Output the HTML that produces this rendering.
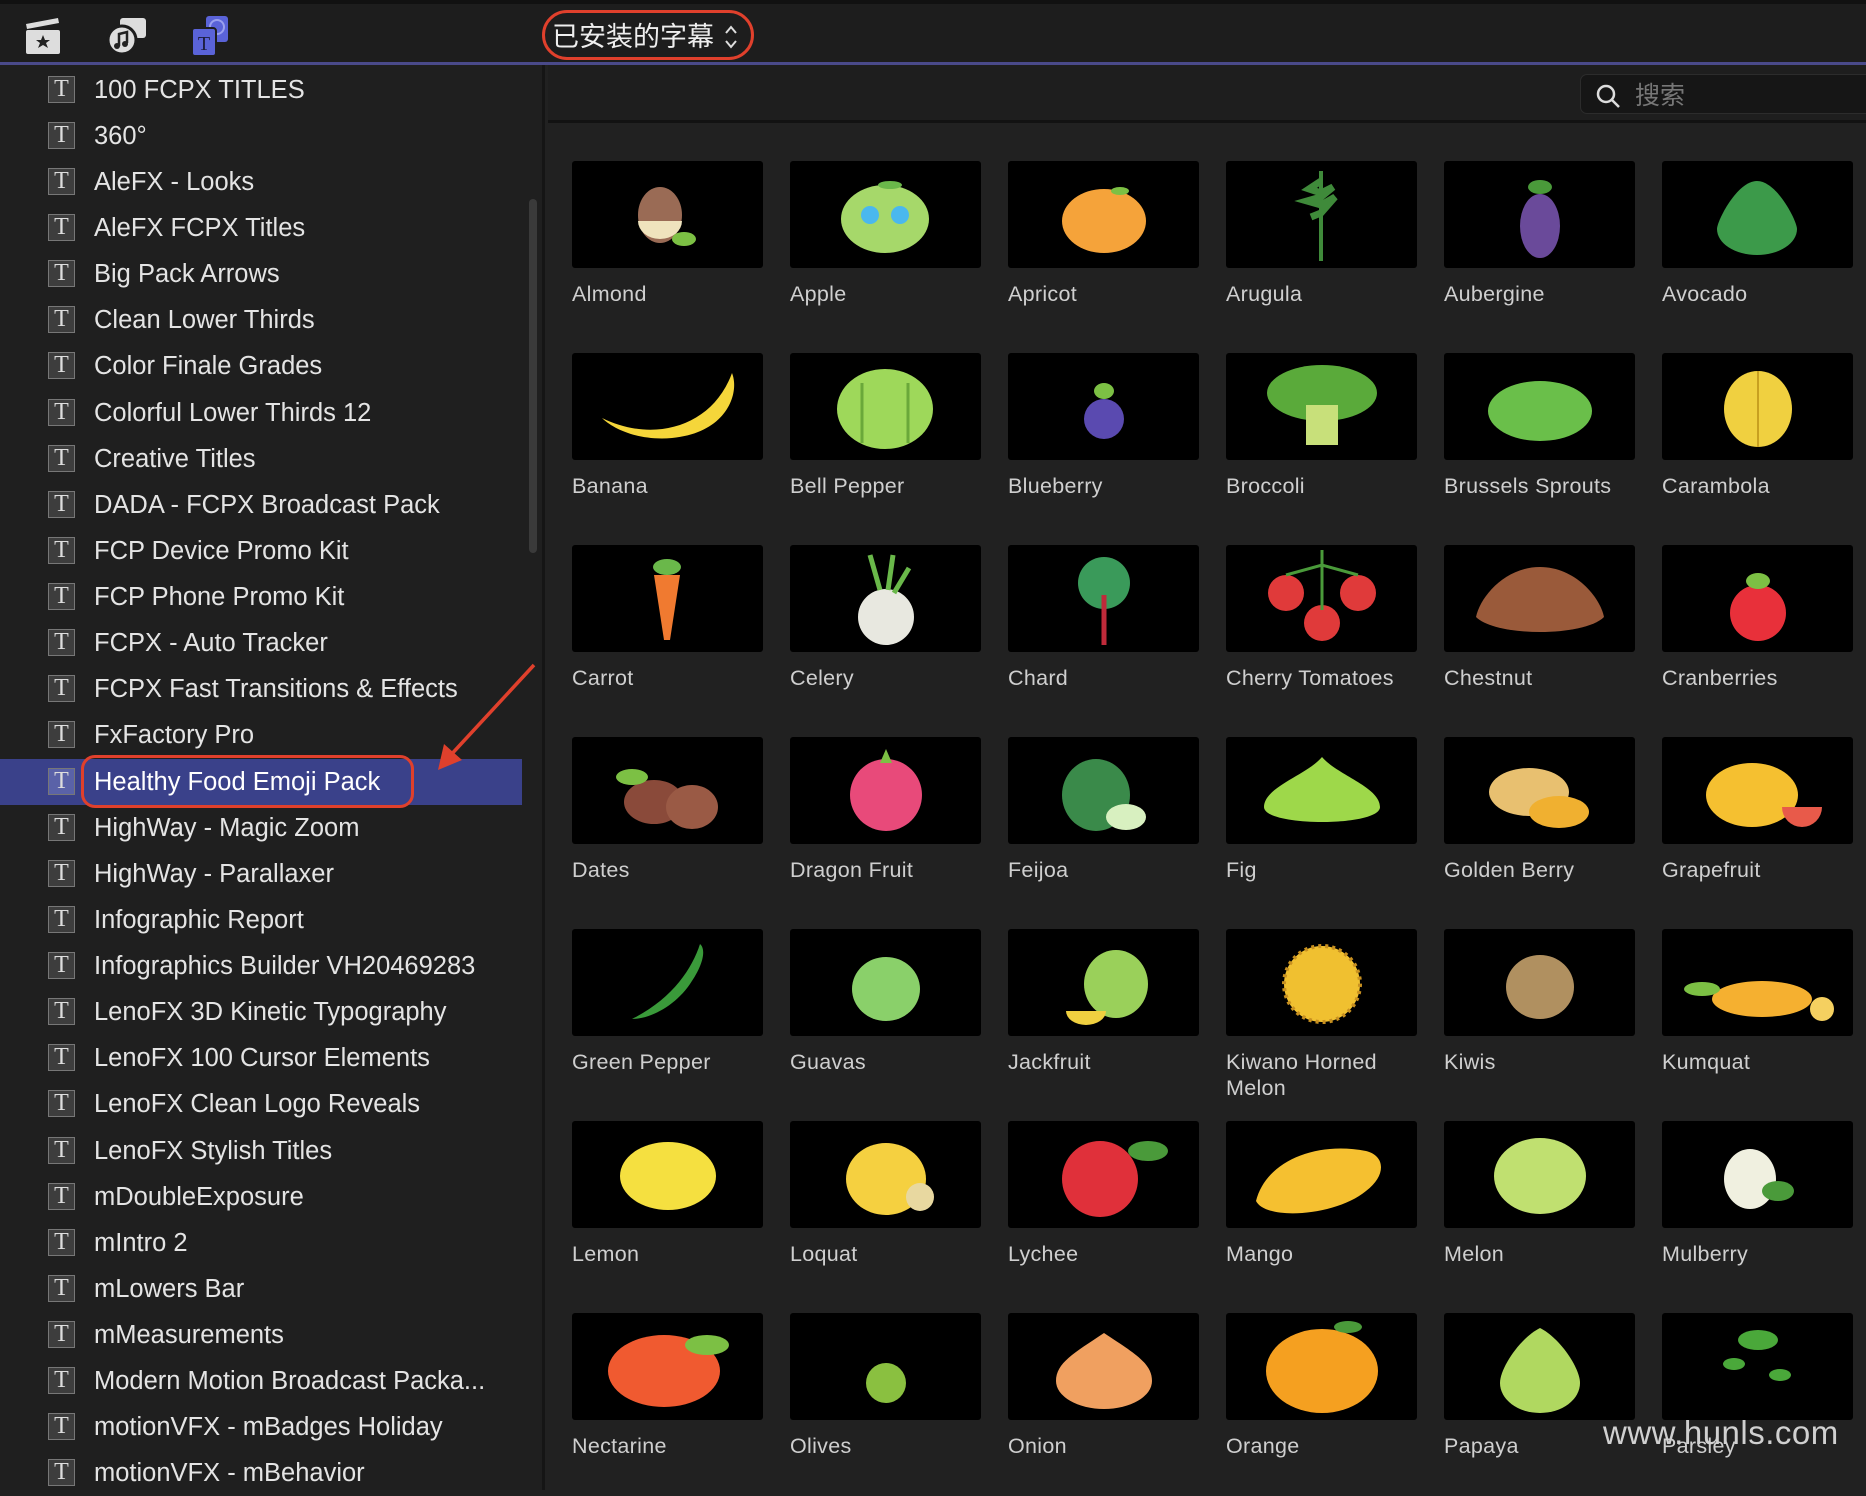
<!DOCTYPE html>
<html><head><meta charset="utf-8"><style>
*{margin:0;padding:0;box-sizing:border-box}
body{width:1866px;height:1490px;background:#212121;position:relative;overflow:hidden;font-family:"Liberation Sans","Noto Sans CJK SC",sans-serif;color:#e4e4e4}
#top{position:absolute;left:0;top:0;width:1866px;height:63px;background:#1d1d1d;border-top:4px solid #111}
#bl{position:absolute;left:0;top:62px;width:1866px;height:3px;background:#4a4a8a}
#side{position:absolute;left:0;top:65px;width:545px;height:1425px;background:#1f1f1f;border-right:3px solid #151515}
.row{position:absolute;left:0;width:522px;height:46px;font-size:25.5px;line-height:46px;padding-left:94px;white-space:nowrap}
.row.sel{background:#3a418a;color:#fff}
.ti{position:absolute;left:48px;top:9px;width:27px;height:27px;background:#3d3d3d;border:1px solid #777;font-family:"Liberation Serif",serif;font-size:24px;line-height:25px;text-align:center;color:#ddd}
.sel .ti{background:#5a62a8}
#sb{position:absolute;left:529px;top:134px;width:8px;height:354px;border-radius:4px;background:#3a3a3a}
#sbar{position:absolute;left:548px;top:65px;width:1318px;height:58px;background:#1e1e1e;border-bottom:3px solid #121212}
#search{position:absolute;left:1580px;top:74px;width:300px;height:40px;border-radius:7px;background:#161616;border:1px solid #2c2c2c}
.th{position:absolute;width:191px;height:107px;background:#000;border-radius:3px}
.lb{position:absolute;width:200px;font-size:21.5px;color:#cfcfcf;letter-spacing:.3px;line-height:26px}
</style></head><body>
<div id="top">
<svg style="position:absolute;left:24px;top:10px" width="38" height="42" viewBox="0 0 38 42"><path d="M2 10 L34 4 L35 9 L3 15Z" fill="#ddd"/><rect x="2" y="16" width="34" height="24" rx="2" fill="#ddd"/><path d="M19 21l2 5h5l-4 3 2 5-5-3-5 3 2-5-4-3h5z" fill="#222"/></svg>
<svg style="position:absolute;left:106px;top:10px" width="42" height="42" viewBox="0 0 42 42"><rect x="14" y="4" width="26" height="20" rx="3" fill="#ddd"/><circle cx="16" cy="26" r="14" fill="#ddd" stroke="#1d1d1d" stroke-width="3"/><path d="M13 32V20l8-2v11" stroke="#222" stroke-width="2.5" fill="none"/><circle cx="11" cy="32" r="3" fill="#222"/><circle cx="19" cy="30" r="3" fill="#222"/></svg>
<svg style="position:absolute;left:190px;top:10px" width="42" height="44" viewBox="0 0 42 44"><rect x="16" y="2" width="22" height="26" rx="3" fill="#5a63d8"/><circle cx="27" cy="13" r="7" fill="none" stroke="#9aa0ee" stroke-width="2"/><rect x="2" y="14" width="24" height="28" rx="3" fill="#5a63d8" stroke="#1d1d1d" stroke-width="2"/><text x="14" y="36" font-family="Liberation Serif" font-size="20" fill="#1d1d3d" text-anchor="middle">T</text></svg>
<div style="position:absolute;left:542px;top:6px;width:212px;height:50px;border:3px solid #e0402c;border-radius:25px"></div>
<div style="position:absolute;left:552px;top:14px;font-size:27px;color:#eee;font-family:'Noto Sans CJK SC',sans-serif;line-height:34px">已安装的字幕</div>
<svg style="position:absolute;left:724px;top:20px" width="14" height="26" viewBox="0 0 14 26"><path d="M2 9l5-6 5 6M2 17l5 6 5-6" stroke="#ddd" stroke-width="2" fill="none"/></svg>
</div>
<div id="bl"></div>
<div id="side">
<div class="row" style="top:2px"><span class="ti">T</span>100 FCPX TITLES</div>
<div class="row" style="top:48px"><span class="ti">T</span>360°</div>
<div class="row" style="top:94px"><span class="ti">T</span>AleFX - Looks</div>
<div class="row" style="top:140px"><span class="ti">T</span>AleFX FCPX Titles</div>
<div class="row" style="top:186px"><span class="ti">T</span>Big Pack Arrows</div>
<div class="row" style="top:232px"><span class="ti">T</span>Clean Lower Thirds</div>
<div class="row" style="top:278px"><span class="ti">T</span>Color Finale Grades</div>
<div class="row" style="top:325px"><span class="ti">T</span>Colorful Lower Thirds 12</div>
<div class="row" style="top:371px"><span class="ti">T</span>Creative Titles</div>
<div class="row" style="top:417px"><span class="ti">T</span>DADA - FCPX Broadcast Pack</div>
<div class="row" style="top:463px"><span class="ti">T</span>FCP Device Promo Kit</div>
<div class="row" style="top:509px"><span class="ti">T</span>FCP Phone Promo Kit</div>
<div class="row" style="top:555px"><span class="ti">T</span>FCPX - Auto Tracker</div>
<div class="row" style="top:601px"><span class="ti">T</span>FCPX Fast Transitions &amp; Effects</div>
<div class="row" style="top:647px"><span class="ti">T</span>FxFactory Pro</div>
<div class="row sel" style="top:694px"><span class="ti">T</span>Healthy Food Emoji Pack</div>
<div class="row" style="top:740px"><span class="ti">T</span>HighWay - Magic Zoom</div>
<div class="row" style="top:786px"><span class="ti">T</span>HighWay - Parallaxer</div>
<div class="row" style="top:832px"><span class="ti">T</span>Infographic Report</div>
<div class="row" style="top:878px"><span class="ti">T</span>Infographics Builder VH20469283</div>
<div class="row" style="top:924px"><span class="ti">T</span>LenoFX 3D Kinetic Typography</div>
<div class="row" style="top:970px"><span class="ti">T</span>LenoFX 100 Cursor Elements</div>
<div class="row" style="top:1016px"><span class="ti">T</span>LenoFX Clean Logo Reveals</div>
<div class="row" style="top:1063px"><span class="ti">T</span>LenoFX Stylish Titles</div>
<div class="row" style="top:1109px"><span class="ti">T</span>mDoubleExposure</div>
<div class="row" style="top:1155px"><span class="ti">T</span>mIntro 2</div>
<div class="row" style="top:1201px"><span class="ti">T</span>mLowers Bar</div>
<div class="row" style="top:1247px"><span class="ti">T</span>mMeasurements</div>
<div class="row" style="top:1293px"><span class="ti">T</span>Modern Motion Broadcast Packa...</div>
<div class="row" style="top:1339px"><span class="ti">T</span>motionVFX - mBadges Holiday</div>
<div class="row" style="top:1385px"><span class="ti">T</span>motionVFX - mBehavior</div>
<div id="sb"></div>
</div>
<div style="position:absolute;left:81px;top:755px;width:333px;height:53px;border:3px solid #e0402c;border-radius:14px"></div>
<svg style="position:absolute;left:430px;top:660px" width="110" height="115" viewBox="0 0 110 115"><path d="M104 5L18 98" stroke="#e0402c" stroke-width="3.5"/><path d="M8 110L14 84 32 100Z" fill="#e0402c"/></svg>
<div id="sbar"><div id="search" style="left:1032px;top:9px">
<svg style="position:absolute;left:14px;top:8px" width="26" height="26" viewBox="0 0 26 26"><circle cx="11" cy="11" r="8" stroke="#ddd" stroke-width="2.5" fill="none"/><path d="M17 17l7 7" stroke="#ddd" stroke-width="2.5"/></svg>
<div style="position:absolute;left:54px;top:2px;font-size:25px;color:#777;font-family:'Noto Sans CJK SC',sans-serif;line-height:34px">搜索</div></div></div>

<!-- grid -->
<div class="th" style="left:572px;top:161px"><svg width="191" height="107"><ellipse cx="88" cy="54" rx="22" ry="28" fill="#9a6b55"/><path d="M66 60h44a22 18 0 0 1-44 0z" fill="#efe3bd"/><ellipse cx="112" cy="78" rx="12" ry="7" fill="#7cc044"/></svg></div><div class="lb" style="left:572px;top:281px">Almond</div>
<div class="th" style="left:790px;top:161px"><svg width="191" height="107"><ellipse cx="95" cy="58" rx="44" ry="34" fill="#a6d86a"/><circle cx="80" cy="54" r="9" fill="#4ab8ee"/><circle cx="110" cy="54" r="9" fill="#4ab8ee"/><ellipse cx="100" cy="24" rx="12" ry="4" fill="#6ab84a"/></svg></div><div class="lb" style="left:790px;top:281px">Apple</div>
<div class="th" style="left:1008px;top:161px"><svg width="191" height="107"><ellipse cx="96" cy="60" rx="42" ry="32" fill="#f5a33a"/><ellipse cx="112" cy="30" rx="9" ry="4" fill="#7cc044"/></svg></div><div class="lb" style="left:1008px;top:281px">Apricot</div>
<div class="th" style="left:1226px;top:161px"><svg width="191" height="107"><path d="M95 100V10" stroke="#3f8a3a" stroke-width="4"/><path d="M95 20l-12 8 12 4 12-6-12 10-14 4 14 4 14-8-14 16-10 4" stroke="#3f8a3a" stroke-width="7" fill="none"/></svg></div><div class="lb" style="left:1226px;top:281px">Arugula</div>
<div class="th" style="left:1444px;top:161px"><svg width="191" height="107"><ellipse cx="96" cy="65" rx="20" ry="32" fill="#6a4a9a"/><ellipse cx="96" cy="26" rx="12" ry="7" fill="#4a9a3a"/></svg></div><div class="lb" style="left:1444px;top:281px">Aubergine</div>
<div class="th" style="left:1662px;top:161px"><svg width="191" height="107"><path d="M95 20c20 0 40 40 40 48a40 26 0 0 1-80 0c0-8 20-48 40-48z" fill="#3c9a4a"/></svg></div><div class="lb" style="left:1662px;top:281px">Avocado</div>

<div class="th" style="left:572px;top:353px"><svg width="191" height="107"><path d="M30 65c50 25 110 10 130-45c8 20-5 60-60 65c-35 3-60-10-70-20z" fill="#f5d63a"/></svg></div><div class="lb" style="left:572px;top:473px">Banana</div>
<div class="th" style="left:790px;top:353px"><svg width="191" height="107"><ellipse cx="95" cy="56" rx="48" ry="40" fill="#9ed85a"/><path d="M72 30v60M118 30v60" stroke="#6aa83a" stroke-width="3"/></svg></div><div class="lb" style="left:790px;top:473px">Bell Pepper</div>
<div class="th" style="left:1008px;top:353px"><svg width="191" height="107"><circle cx="96" cy="66" r="20" fill="#5a4ab0"/><ellipse cx="96" cy="38" rx="10" ry="8" fill="#7cc044"/></svg></div><div class="lb" style="left:1008px;top:473px">Blueberry</div>
<div class="th" style="left:1226px;top:353px"><svg width="191" height="107"><ellipse cx="96" cy="40" rx="55" ry="28" fill="#5aaa3a"/><rect x="80" y="52" width="32" height="40" fill="#c8e07a"/></svg></div><div class="lb" style="left:1226px;top:473px">Broccoli</div>
<div class="th" style="left:1444px;top:353px"><svg width="191" height="107"><ellipse cx="96" cy="58" rx="52" ry="30" fill="#6abf4a"/></svg></div><div class="lb" style="left:1444px;top:473px">Brussels Sprouts</div>
<div class="th" style="left:1662px;top:353px"><svg width="191" height="107"><ellipse cx="96" cy="56" rx="34" ry="38" fill="#f0d040"/><path d="M96 18v76" stroke="#c8a020" stroke-width="2"/></svg></div><div class="lb" style="left:1662px;top:473px">Carambola</div>

<div class="th" style="left:572px;top:545px"><svg width="191" height="107"><path d="M82 30h26l-10 65h-6z" fill="#f07a30"/><ellipse cx="95" cy="22" rx="14" ry="8" fill="#6ab84a"/></svg></div><div class="lb" style="left:572px;top:665px">Carrot</div>
<div class="th" style="left:790px;top:545px"><svg width="191" height="107"><circle cx="96" cy="72" r="28" fill="#e8e8e0"/><path d="M90 45l-10-35M98 45l5-35M104 48l15-25" stroke="#6ab84a" stroke-width="5"/></svg></div><div class="lb" style="left:790px;top:665px">Celery</div>
<div class="th" style="left:1008px;top:545px"><svg width="191" height="107"><ellipse cx="96" cy="38" rx="26" ry="26" fill="#3a9a5a"/><path d="M96 50v50" stroke="#c02a3a" stroke-width="5"/></svg></div><div class="lb" style="left:1008px;top:665px">Chard</div>
<div class="th" style="left:1226px;top:545px"><svg width="191" height="107"><circle cx="60" cy="48" r="18" fill="#e03a3a"/><circle cx="132" cy="48" r="18" fill="#e03a3a"/><circle cx="96" cy="78" r="18" fill="#e03a3a"/><path d="M96 5v60M60 30l36-10 36 10" stroke="#4a9a3a" stroke-width="3" fill="none"/></svg></div><div class="lb" style="left:1226px;top:665px">Cherry Tomatoes</div>
<div class="th" style="left:1444px;top:545px"><svg width="191" height="107"><path d="M96 22c35 0 60 30 64 50c-20 20-108 20-128 0c4-20 29-50 64-50z" fill="#9a5a3a"/></svg></div><div class="lb" style="left:1444px;top:665px">Chestnut</div>
<div class="th" style="left:1662px;top:545px"><svg width="191" height="107"><circle cx="96" cy="68" r="28" fill="#e8303a"/><ellipse cx="96" cy="36" rx="12" ry="8" fill="#7cc044"/></svg></div><div class="lb" style="left:1662px;top:665px">Cranberries</div>

<div class="th" style="left:572px;top:737px"><svg width="191" height="107"><ellipse cx="82" cy="65" rx="30" ry="22" fill="#8a4a3a"/><ellipse cx="120" cy="70" rx="26" ry="22" fill="#9a5a45"/><ellipse cx="60" cy="40" rx="16" ry="8" fill="#7cc044"/></svg></div><div class="lb" style="left:572px;top:857px">Dates</div>
<div class="th" style="left:790px;top:737px"><svg width="191" height="107"><ellipse cx="96" cy="58" rx="36" ry="36" fill="#e84a7a"/><path d="M96 12l6 14h-12z" fill="#7cc044"/></svg></div><div class="lb" style="left:790px;top:857px">Dragon Fruit</div>
<div class="th" style="left:1008px;top:737px"><svg width="191" height="107"><ellipse cx="88" cy="58" rx="34" ry="36" fill="#3a8a4a"/><ellipse cx="118" cy="80" rx="20" ry="13" fill="#d8f0c0"/></svg></div><div class="lb" style="left:1008px;top:857px">Feijoa</div>
<div class="th" style="left:1226px;top:737px"><svg width="191" height="107"><path d="M96 20c15 18 58 30 58 50c0 20-116 20-116 0c0-20 43-32 58-50z" fill="#9ed84a"/></svg></div><div class="lb" style="left:1226px;top:857px">Fig</div>
<div class="th" style="left:1444px;top:737px"><svg width="191" height="107"><ellipse cx="85" cy="55" rx="40" ry="24" fill="#e8c070"/><ellipse cx="115" cy="75" rx="30" ry="16" fill="#f0b030"/></svg></div><div class="lb" style="left:1444px;top:857px">Golden Berry</div>
<div class="th" style="left:1662px;top:737px"><svg width="191" height="107"><ellipse cx="90" cy="58" rx="46" ry="32" fill="#f5c030"/><path d="M120 70a18 18 0 0 0 40 0z" fill="#e85a4a"/></svg></div><div class="lb" style="left:1662px;top:857px">Grapefruit</div>

<div class="th" style="left:572px;top:929px"><svg width="191" height="107"><path d="M60 90c40-20 60-50 68-75c6 5 4 20-10 40c-15 22-40 35-58 35z" fill="#3a9a3a"/></svg></div><div class="lb" style="left:572px;top:1049px">Green Pepper</div>
<div class="th" style="left:790px;top:929px"><svg width="191" height="107"><ellipse cx="96" cy="60" rx="34" ry="32" fill="#8ad06a"/></svg></div><div class="lb" style="left:790px;top:1049px">Guavas</div>
<div class="th" style="left:1008px;top:929px"><svg width="191" height="107"><ellipse cx="108" cy="55" rx="32" ry="34" fill="#9ad05a"/><path d="M58 82a20 14 0 0 0 40 0z" fill="#f0d040"/></svg></div><div class="lb" style="left:1008px;top:1049px">Jackfruit</div>
<div class="th" style="left:1226px;top:929px"><svg width="191" height="107"><circle cx="96" cy="55" r="38" fill="#f0c030" stroke="#c89020" stroke-width="4" stroke-dasharray="3 4"/></svg></div><div class="lb" style="left:1226px;top:1049px">Kiwano Horned<br>Melon</div>
<div class="th" style="left:1444px;top:929px"><svg width="191" height="107"><ellipse cx="96" cy="58" rx="34" ry="32" fill="#b09060"/></svg></div><div class="lb" style="left:1444px;top:1049px">Kiwis</div>
<div class="th" style="left:1662px;top:929px"><svg width="191" height="107"><ellipse cx="100" cy="70" rx="50" ry="18" fill="#f5b030"/><ellipse cx="40" cy="60" rx="18" ry="7" fill="#7cc044"/><circle cx="160" cy="80" r="12" fill="#f5d060"/></svg></div><div class="lb" style="left:1662px;top:1049px">Kumquat</div>

<div class="th" style="left:572px;top:1121px"><svg width="191" height="107"><ellipse cx="96" cy="55" rx="48" ry="34" fill="#f5e040"/></svg></div><div class="lb" style="left:572px;top:1241px">Lemon</div>
<div class="th" style="left:790px;top:1121px"><svg width="191" height="107"><ellipse cx="96" cy="58" rx="40" ry="36" fill="#f5d040"/><circle cx="130" cy="76" r="14" fill="#e8d8a0"/></svg></div><div class="lb" style="left:790px;top:1241px">Loquat</div>
<div class="th" style="left:1008px;top:1121px"><svg width="191" height="107"><circle cx="92" cy="58" r="38" fill="#e0303a"/><ellipse cx="140" cy="30" rx="20" ry="10" fill="#4a9a3a"/></svg></div><div class="lb" style="left:1008px;top:1241px">Lychee</div>
<div class="th" style="left:1226px;top:1121px"><svg width="191" height="107"><path d="M30 80c10-40 60-60 110-50c20 5 20 25 0 40c-30 25-100 30-110 10z" fill="#f5c030"/></svg></div><div class="lb" style="left:1226px;top:1241px">Mango</div>
<div class="th" style="left:1444px;top:1121px"><svg width="191" height="107"><ellipse cx="96" cy="55" rx="46" ry="38" fill="#c0e070"/></svg></div><div class="lb" style="left:1444px;top:1241px">Melon</div>
<div class="th" style="left:1662px;top:1121px"><svg width="191" height="107"><ellipse cx="88" cy="58" rx="26" ry="30" fill="#f0f0e0"/><ellipse cx="116" cy="70" rx="16" ry="10" fill="#4a9a3a"/></svg></div><div class="lb" style="left:1662px;top:1241px">Mulberry</div>

<div class="th" style="left:572px;top:1313px"><svg width="191" height="107"><ellipse cx="92" cy="58" rx="56" ry="36" fill="#f05a30"/><ellipse cx="135" cy="32" rx="22" ry="10" fill="#7cc044"/></svg></div><div class="lb" style="left:572px;top:1433px">Nectarine</div>
<div class="th" style="left:790px;top:1313px"><svg width="191" height="107"><circle cx="96" cy="70" r="20" fill="#8ac040"/></svg></div><div class="lb" style="left:790px;top:1433px">Olives</div>
<div class="th" style="left:1008px;top:1313px"><svg width="191" height="107"><path d="M96 20c30 20 48 30 48 48a48 28 0 0 1-96 0c0-18 18-28 48-48z" fill="#f0a060"/></svg></div><div class="lb" style="left:1008px;top:1433px">Onion</div>
<div class="th" style="left:1226px;top:1313px"><svg width="191" height="107"><ellipse cx="96" cy="58" rx="56" ry="42" fill="#f5a020"/><ellipse cx="122" cy="14" rx="14" ry="6" fill="#4a9a3a"/></svg></div><div class="lb" style="left:1226px;top:1433px">Orange</div>
<div class="th" style="left:1444px;top:1313px"><svg width="191" height="107"><path d="M96 15c20 10 40 40 40 55a40 30 0 0 1-80 0c0-15 20-45 40-55z" fill="#b0d860"/></svg></div><div class="lb" style="left:1444px;top:1433px">Papaya</div>
<div class="th" style="left:1662px;top:1313px"><svg width="191" height="107"><ellipse cx="96" cy="27" rx="20" ry="10" fill="#4aa83a"/><ellipse cx="72" cy="51" rx="11" ry="6" fill="#4aa83a"/><ellipse cx="118" cy="62" rx="11" ry="6" fill="#4aa83a"/></svg></div><div class="lb" style="left:1662px;top:1433px">Parsley</div>

<div style="position:absolute;left:1603px;top:1413px;font-size:33px;color:#d0d0d0;line-height:40px;letter-spacing:.5px">www.hunls.com</div>
</body></html>
